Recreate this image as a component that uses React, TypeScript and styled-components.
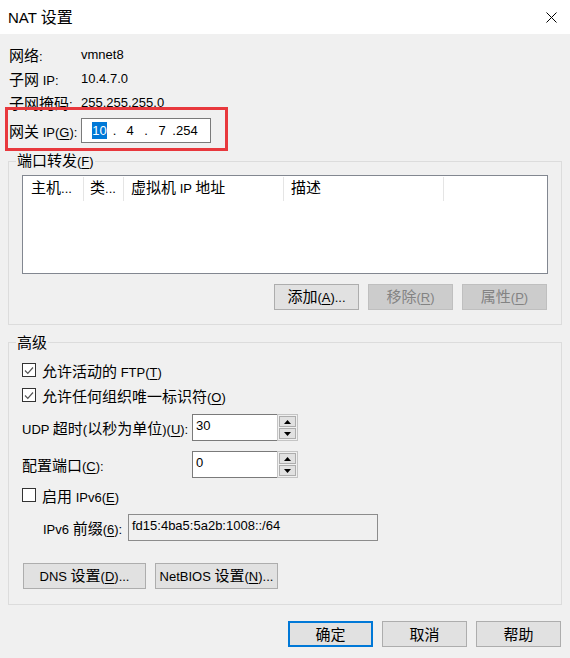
import React from 'react';
import styled, { createGlobalStyle } from 'styled-components';

const GlobalStyle = createGlobalStyle`
  html, body {
    margin: 0;
    padding: 0;
    background: #f0f0f0;
  }
  body {
    font-family: "Noto Sans CJK SC", "Noto Sans", sans-serif;
    font-size: 15px;
    color: #000;
  }
  * {
    box-sizing: border-box;
  }
`;

const Latin = styled.span<{ $size?: number }>`
  font-family: "Liberation Sans", Arial, sans-serif;
  font-size: ${(p) => p.$size ?? 13}px;
  white-space: pre;

  u {
    text-decoration: underline;
    text-underline-offset: 2px;
  }
`;

// "&X" marks the accelerator key that gets underlined
const accel = (s: string) => {
  const i = s.indexOf('&');
  if (i < 0) return s;
  return (
    <>
      {s.slice(0, i)}
      <u>{s[i + 1]}</u>
      {s.slice(i + 2)}
    </>
  );
};

// Chinese and Latin runs are sized apart, as Windows does with its UI fonts
const Txt = ({ t, size }: { t: string; size?: number }) => {
  const parts = t.split(/([\x00-\x7f]+)/).filter(Boolean);
  return (
    <span>
      {parts.map((p, i) =>
        /^[\x00-\x7f]/.test(p) ? (
          <Latin key={i} $size={size}>
            {accel(p)}
          </Latin>
        ) : (
          <span key={i}>{p}</span>
        )
      )}
    </span>
  );
};

const Window = styled.div`
  width: 570px;
  height: 658px;
  background: #f0f0f0;
  display: flex;
  flex-direction: column;
  overflow: hidden;
`;

const TitleBar = styled.div`
  height: 34px;
  background: #fff;
  display: flex;
  align-items: center;
  justify-content: space-between;
  padding: 0 13px 0 8px;
  flex-shrink: 0;
`;

const Title = styled.div`
  font-size: 16px;
  line-height: 20px;
`;

const Body = styled.div`
  padding: 9px 8px 0;
  display: flex;
  flex-direction: column;
`;

const InfoList = styled.div`
  padding-left: 1px;
`;

const InfoRow = styled.div`
  display: grid;
  grid-template-columns: 72px auto;
  height: 24px;
  line-height: 24px;
  white-space: nowrap;
`;

const GatewayRow = styled.div`
  position: relative;
  display: flex;
  align-items: center;
  height: 25px;
  margin-top: 3px;
  white-space: nowrap;
`;

const RowLabel = styled.div<{ $w: number }>`
  width: ${(p) => p.$w}px;
  flex-shrink: 0;
  white-space: nowrap;
`;

const Highlight = styled.div`
  position: absolute;
  left: -4px;
  top: -11px;
  width: 223px;
  height: 44px;
  border: 3px solid #e8383d;
  pointer-events: none;
`;

const IpBox = styled.div`
  width: 130px;
  height: 25px;
  border: 1px solid #7a7a7a;
  background: #fff;
  display: flex;
  align-items: center;
  padding-left: 10px;
  font-family: "Liberation Sans", Arial, sans-serif;
  font-size: 13px;
`;

const Octet = styled.span<{ $w: number; $selected?: boolean }>`
  display: inline-block;
  width: ${(p) => p.$w}px;
  text-align: center;
  line-height: 17px;
  background: ${(p) => (p.$selected ? '#0078d7' : 'transparent')};
  color: ${(p) => (p.$selected ? '#fff' : '#000')};
`;

const Group = styled.fieldset`
  margin: 0;
  min-width: 0;
  border: 1px solid #dcdcdc;
  padding: 0 13px 14px;
`;

const Legend = styled.legend`
  font-size: 15px;
  line-height: 18px;
  padding: 0 1px;
  margin-left: -6px;
`;

const ListBox = styled.div`
  margin-top: 4px;
  height: 99px;
  border: 1px solid #828790;
  background: #fff;
`;

const ListHeader = styled.div`
  display: flex;
`;

const HeaderCell = styled.div<{ $w: number; $pad?: number }>`
  width: ${(p) => p.$w}px;
  height: 24px;
  margin-top: 1px;
  line-height: 20px;
  padding-left: ${(p) => p.$pad ?? 7}px;
  border-right: 1px solid #e5e5e5;
  white-space: nowrap;
  overflow: hidden;
`;

const ButtonRow = styled.div<{ $justify?: string; $gap?: number }>`
  display: flex;
  justify-content: ${(p) => p.$justify ?? 'flex-end'};
  gap: ${(p) => p.$gap ?? 9}px;
`;

const Button = styled.button<{ $w?: number; $default?: boolean }>`
  width: ${(p) => p.$w ?? 85}px;
  height: 26px;
  padding: 0;
  font-family: inherit;
  font-size: 15px;
  line-height: 20px;
  color: #000;
  background: #e1e1e1;
  border: ${(p) => (p.$default ? '2px solid #0078d7' : '1px solid #adadad')};
  white-space: nowrap;

  &:disabled {
    background: #cccccc;
    border-color: #bfbfbf;
    color: #838383;
  }
`;

const CheckRow = styled.label`
  display: flex;
  align-items: center;
  gap: 6px;
  height: 24px;
  white-space: nowrap;
`;

const CheckBox = styled.span`
  width: 14px;
  height: 14px;
  border: 1px solid #333;
  background: #fff;
  display: inline-flex;
  align-items: center;
  justify-content: center;
  flex-shrink: 0;
`;

const FieldRow = styled.div<{ $indent?: number }>`
  display: flex;
  align-items: center;
  padding-left: ${(p) => p.$indent ?? 0}px;
`;

const SpinBox = styled.div`
  display: flex;
  width: 106px;
  height: 27px;
`;

const SpinField = styled.div`
  flex: 1;
  border: 1px solid #7a7a7a;
  border-right: none;
  background: #fff;
  padding-left: 3px;
  line-height: 22px;
  font-family: "Liberation Sans", Arial, sans-serif;
  font-size: 13px;
`;

const SpinButtons = styled.div`
  width: 21px;
  border: 1px solid #c4c4c4;
  background: #f0f0f0;
  padding: 1px;
  display: flex;
  flex-direction: column;
  gap: 1px;
`;

const SpinButton = styled.div`
  flex: 1;
  border: 1px solid #adadad;
  background: #e1e1e1;
  display: flex;
  align-items: center;
  justify-content: center;
`;

const TextBox = styled.div<{ $w: number }>`
  width: ${(p) => p.$w}px;
  height: 27px;
  border: 1px solid #8c8c8c;
  background: #f0f0f0;
  padding-left: 3px;
  line-height: 22px;
  font-family: "Liberation Sans", Arial, sans-serif;
  font-size: 13px;
`;

const Footer = styled(ButtonRow)`
  margin-top: 16px;
  padding-right: 1px;
`;

const Check = () => (
  <svg width="10" height="9" viewBox="0 0 10 9">
    <polyline points="1,4.5 3.8,7.3 9,1.5" fill="none" stroke="#555" strokeWidth="1.2" />
  </svg>
);

const Arrow = ({ up }: { up?: boolean }) => (
  <svg width="7" height="4" viewBox="0 0 7 4">
    <polygon points={up ? '0,4 7,4 3.5,0' : '0,0 7,0 3.5,4'} fill="#000" />
  </svg>
);

const Spinner = ({ value }: { value: string }) => (
  <SpinBox>
    <SpinField>{value}</SpinField>
    <SpinButtons>
      <SpinButton>
        <Arrow up />
      </SpinButton>
      <SpinButton>
        <Arrow />
      </SpinButton>
    </SpinButtons>
  </SpinBox>
);

const columns = [
  { label: '主机...', w: 61, pad: 8 },
  { label: '类...', w: 40, pad: 6 },
  { label: '虚拟机 IP 地址', w: 160 },
  { label: '描述', w: 160 },
];

const info = [
  ['网络:', 'vmnet8'],
  ['子网 IP:', '10.4.7.0'],
  ['子网掩码:', '255.255.255.0'],
];

export default function App() {
  return (
    <Window>
      <GlobalStyle />
      <TitleBar>
        <Title>
          <Txt t="NAT 设置" size={15} />
        </Title>
        <svg width="11" height="11" viewBox="0 0 11 11">
          <path d="M0.5 0.5 L10.5 10.5 M10.5 0.5 L0.5 10.5" stroke="#000" strokeWidth="1" />
        </svg>
      </TitleBar>

      <Body>
        <InfoList>
          {info.map(([label, value]) => (
            <InfoRow key={label}>
              <Txt t={label} />
              <Latin>{value}</Latin>
            </InfoRow>
          ))}
          <GatewayRow>
            <RowLabel $w={72}>
              <Txt t="网关 IP(&G):" />
            </RowLabel>
            <IpBox>
              <Octet $w={15} $selected>
                10
              </Octet>
              <Octet $w={15}>.</Octet>
              <Octet $w={16}>4</Octet>
              <Octet $w={16}>.</Octet>
              <Octet $w={16}>7</Octet>
              <Octet $w={30}>.254</Octet>
            </IpBox>
            <Highlight />
          </GatewayRow>
        </InfoList>

        <Group style={{ marginTop: 8 }}>
          <Legend>
            <Txt t="端口转发(&F)" />
          </Legend>
          <ListBox>
            <ListHeader>
              {columns.map((c) => (
                <HeaderCell key={c.label} $w={c.w} $pad={c.pad}>
                  <Txt t={c.label} />
                </HeaderCell>
              ))}
            </ListHeader>
          </ListBox>
          <ButtonRow style={{ marginTop: 10, paddingRight: 1 }}>
            <Button>
              <Txt t="添加(&A)..." />
            </Button>
            <Button disabled>
              <Txt t="移除(&R)" />
            </Button>
            <Button disabled>
              <Txt t="属性(&P)" />
            </Button>
          </ButtonRow>
        </Group>

        <Group style={{ marginTop: 8, paddingBottom: 15 }}>
          <Legend>高级</Legend>
          <CheckRow style={{ marginTop: 7 }}>
            <CheckBox>
              <Check />
            </CheckBox>
            <Txt t="允许活动的 FTP(&T)" />
          </CheckRow>
          <CheckRow style={{ marginTop: 1 }}>
            <CheckBox>
              <Check />
            </CheckBox>
            <Txt t="允许任何组织唯一标识符(&O)" />
          </CheckRow>
          <FieldRow style={{ marginTop: 7 }}>
            <RowLabel $w={170}>
              <Txt t="UDP 超时(以秒为单位)(&U):" />
            </RowLabel>
            <Spinner value="30" />
          </FieldRow>
          <FieldRow style={{ marginTop: 10 }}>
            <RowLabel $w={170}>
              <Txt t="配置端口(&C):" />
            </RowLabel>
            <Spinner value="0" />
          </FieldRow>
          <CheckRow style={{ marginTop: 5 }}>
            <CheckBox />
            <Txt t="启用 IPv6(&E)" />
          </CheckRow>
          <FieldRow $indent={21} style={{ marginTop: 7 }}>
            <RowLabel $w={85}>
              <Txt t="IPv6 前缀(&6):" />
            </RowLabel>
            <TextBox $w={250}>fd15:4ba5:5a2b:1008::/64</TextBox>
          </FieldRow>
          <ButtonRow $justify="flex-start" style={{ marginTop: 22, paddingLeft: 1 }}>
            <Button $w={123}>
              <Txt t="DNS 设置(&D)..." />
            </Button>
            <Button $w={123}>
              <Txt t="NetBIOS 设置(&N)..." />
            </Button>
          </ButtonRow>
        </Group>

        <Footer>
          <Button $default>确定</Button>
          <Button>取消</Button>
          <Button>帮助</Button>
        </Footer>
      </Body>
    </Window>
  );
}
